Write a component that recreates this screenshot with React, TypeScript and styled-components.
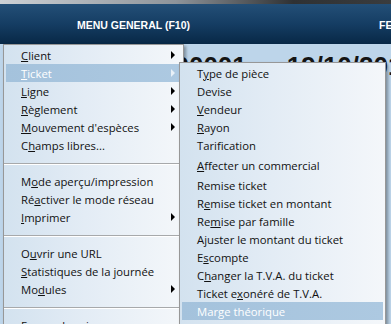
import React from "react";
import styled, { createGlobalStyle } from "styled-components";

const GlobalStyle = createGlobalStyle`
  html, body {
    margin: 0;
    padding: 0;
  }
  body {
    width: 391px;
    height: 324px;
    overflow: hidden;
    background: #bdd5ea;
    font-family: "Open Sans", "Noto Sans", sans-serif;
  }
`;

const Page = styled.div`
  position: relative;
  width: 391px;
  height: 324px;
  overflow: hidden;
  background: #bdd5ea;
`;

const TopStrip = styled.div`
  height: 4px;
  background: linear-gradient(to right, #cdd1d5 0%, #8e949a 45%, #2f3133 75%, #3a3c3e 100%);
`;

const Header = styled.div`
  display: flex;
  height: 40px;
  background: linear-gradient(to bottom, #234f77 0%, #153d63 50%, #082846 100%);
  color: #fff;
  font-family: "Liberation Sans", Arial, sans-serif;
  font-weight: bold;
  font-size: 10.5px;
  white-space: nowrap;
`;

const HeaderCell = styled.div<{ $width?: number; $pad?: number }>`
  display: flex;
  align-items: center;
  justify-content: ${(p) => (p.$pad ? "flex-start" : "center")};
  width: ${(p) => (p.$width ? `${p.$width}px` : "auto")};
  flex: ${(p) => (p.$width ? "none" : "1")};
  padding-left: ${(p) => p.$pad ?? 0}px;
  padding-top: 1px;
`;

const HeaderDivider = styled.div`
  width: 1px;
  background: #7b9cbc;
`;

const Content = styled.div`
  display: flex;
  padding: 7px 0 0 160px;
  gap: 40px;
  font-family: "Liberation Sans", Arial, sans-serif;
  font-weight: bold;
  font-size: 26px;
  line-height: 30px;
  color: #141414;
  white-space: nowrap;
`;

const Menu = styled.div<{ $left: number; $top: number; $width: number }>`
  position: absolute;
  left: ${(p) => p.$left}px;
  top: ${(p) => p.$top}px;
  width: ${(p) => p.$width}px;
  box-sizing: border-box;
  padding: 1px 2px 40px;
  border: 1px solid #979797;
  background: linear-gradient(to right, #d3e2ef 0%, #e3ecf5 45%, #f4f7fa 100%);
  box-shadow: 2px 2px 3px rgba(0, 0, 0, 0.35);
  font-size: 11.3px;
`;

const Item = styled.div<{ $active?: boolean; $tall?: boolean; $pad: number }>`
  display: flex;
  align-items: center;
  height: ${(p) => (p.$tall ? 22 : 18)}px;
  padding-left: ${(p) => p.$pad}px;
  color: ${(p) => (p.$active ? "#ffffff" : "#111111")};
  background: ${(p) =>
    p.$active ? "linear-gradient(to right, #a4c2dc 0%, #adc9e1 100%)" : "transparent"};
  white-space: nowrap;
`;

const Label = styled.span`
  flex: 1;
`;

const Arrow = styled.span<{ $active?: boolean }>`
  width: 0;
  height: 0;
  margin-right: 6px;
  border-top: 4px solid transparent;
  border-bottom: 4px solid transparent;
  border-left: 4px solid ${(p) => (p.$active ? "#e8f0f7" : "#000")};
`;

const Separator = styled.div`
  height: 18px;
  display: flex;
  align-items: center;
  margin: 0 -2px;

  &::after {
    content: "";
    flex: 1;
    height: 1px;
    background: #a7a9ab;
    box-shadow: 0 1px 0 #ffffff;
  }
`;

type Entry = { label: string; key?: number; arrow?: boolean; active?: boolean; tall?: boolean } | "sep";

const mainItems: Entry[] = [
  { label: "Client", key: 0, arrow: true },
  { label: "Ticket", key: 0, arrow: true, active: true },
  { label: "Ligne", key: 0, arrow: true },
  { label: "Règlement", key: 0, arrow: true },
  { label: "Mouvement d'espèces", key: 0, arrow: true },
  { label: "Champs libres...", key: 1 },
  "sep",
  { label: "Mode aperçu/impression", key: 1 },
  { label: "Réactiver le mode réseau", key: 2 },
  { label: "Imprimer", key: 0, arrow: true },
  "sep",
  { label: "Ouvrir une URL", key: 1 },
  { label: "Statistiques de la journée", key: 0 },
  { label: "Modules", key: 2, arrow: true },
  "sep",
  { label: "Fermer la caisse", key: 0 },
];

const subItems: Entry[] = [
  { label: "Type de pièce", key: 1 },
  { label: "Devise" },
  { label: "Vendeur", key: 0 },
  { label: "Rayon", key: 0 },
  { label: "Tarification" },
  { label: "Affecter un commercial", key: 0, tall: true },
  { label: "Remise ticket" },
  { label: "Remise ticket en montant", key: 1 },
  { label: "Remise par famille", key: 2 },
  { label: "Ajuster le montant du ticket" },
  { label: "Escompte", key: 1 },
  { label: "Changer la T.V.A. du ticket", key: 1 },
  { label: "Ticket exonéré de T.V.A.", key: 8 },
  { label: "Marge théorique", active: true },
];

function Mnemonic({ text, at }: { text: string; at?: number }) {
  if (at === undefined) return <>{text}</>;
  return (
    <>
      {text.slice(0, at)}
      <u>{text[at]}</u>
      {text.slice(at + 1)}
    </>
  );
}

function MenuList({ items, pad }: { items: Entry[]; pad: number }) {
  return (
    <>
      {items.map((it, i) =>
        it === "sep" ? (
          <Separator key={i} />
        ) : (
          <Item key={i} $active={it.active} $tall={it.tall} $pad={pad}>
            <Label>
              <Mnemonic text={it.label} at={it.key} />
            </Label>
            {it.arrow && <Arrow $active={it.active} />}
          </Item>
        )
      )}
    </>
  );
}

export default function App() {
  return (
    <Page>
      <GlobalStyle />
      <TopStrip />
      <Header>
        <HeaderCell $width={267}>MENU GENERAL (F10)</HeaderCell>
        <HeaderDivider />
        <HeaderCell $pad={112}>FERMER (F12)</HeaderCell>
      </Header>
      <Content>
        <span>000001</span>
        <span>19/10/2012</span>
      </Content>
      <Menu $left={3} $top={44} $width={181}>
        <MenuList items={mainItems} pad={15} />
      </Menu>
      <Menu $left={179} $top={62} $width={207}>
        <MenuList items={subItems} pad={15} />
      </Menu>
    </Page>
  );
}
